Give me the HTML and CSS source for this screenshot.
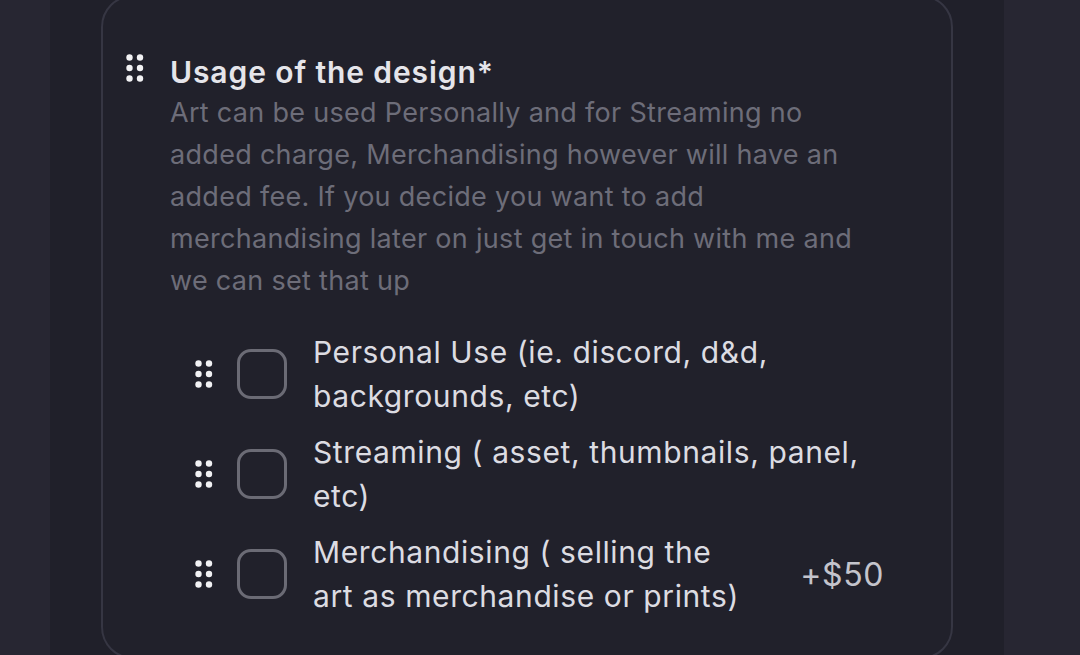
FILE: index.html
```html
<!DOCTYPE html>
<html lang="en">
<head>
    <meta charset="UTF-8">
    <meta name="viewport" content="width=device-width, initial-scale=1.0">
    <title>Usage of the design</title>
    <link rel="stylesheet" href="styles.css">
</head>
<body>
    <div class="page">
        <div class="card">
            <div class="question">
                <span class="handle">
                    <svg width="18" height="28" viewBox="0 0 18 28"><g fill="#f2f2f4"><circle cx="3.5" cy="3.5" r="3.2"/><circle cx="14" cy="3.5" r="3.2"/><circle cx="3.5" cy="14" r="3.2"/><circle cx="14" cy="14" r="3.2"/><circle cx="3.5" cy="24.5" r="3.2"/><circle cx="14" cy="24.5" r="3.2"/></g></svg>
                </span>
                <div class="question-body">
                    <h2 class="title">Usage of the design*</h2>
                    <p class="description">Art can be used Personally and for Streaming no added charge, Merchandising however will have an added fee. If you decide you want to add merchandising later on just get in touch with me and we can set that up</p>
                </div>
            </div>

            <div class="options">
                <label class="option">
                    <span class="handle">
                        <svg width="18" height="28" viewBox="0 0 18 28"><g fill="#f2f2f4"><circle cx="3.5" cy="3.5" r="3.2"/><circle cx="14" cy="3.5" r="3.2"/><circle cx="3.5" cy="14" r="3.2"/><circle cx="14" cy="14" r="3.2"/><circle cx="3.5" cy="24.5" r="3.2"/><circle cx="14" cy="24.5" r="3.2"/></g></svg>
                    </span>
                    <span class="box"></span>
                    <span class="option-text">Personal Use (ie. discord, d&amp;d, backgrounds, etc)</span>
                </label>
                <label class="option">
                    <span class="handle">
                        <svg width="18" height="28" viewBox="0 0 18 28"><g fill="#f2f2f4"><circle cx="3.5" cy="3.5" r="3.2"/><circle cx="14" cy="3.5" r="3.2"/><circle cx="3.5" cy="14" r="3.2"/><circle cx="14" cy="14" r="3.2"/><circle cx="3.5" cy="24.5" r="3.2"/><circle cx="14" cy="24.5" r="3.2"/></g></svg>
                    </span>
                    <span class="box"></span>
                    <span class="option-text">Streaming ( asset, thumbnails, panel, etc)</span>
                </label>
                <label class="option">
                    <span class="handle">
                        <svg width="18" height="28" viewBox="0 0 18 28"><g fill="#f2f2f4"><circle cx="3.5" cy="3.5" r="3.2"/><circle cx="14" cy="3.5" r="3.2"/><circle cx="3.5" cy="14" r="3.2"/><circle cx="14" cy="14" r="3.2"/><circle cx="3.5" cy="24.5" r="3.2"/><circle cx="14" cy="24.5" r="3.2"/></g></svg>
                    </span>
                    <span class="box"></span>
                    <span class="option-text">Merchandising ( selling the art as merchandise or prints)</span>
                    <span class="price">+$50</span>
                </label>
            </div>
        </div>
    </div>
</body>
</html>
```

FILE: styles.css
```css
body {
    margin: 0;
    background: #272632;
    font-family: Inter, "Noto Sans", sans-serif;
    overflow: hidden;
}

.page {
    margin: 0 76px 0 50px;
    height: 655px;
    background: #20202a;
    overflow: hidden;
}

.card {
    margin: -5px 0 0 51px;
    width: 852px;
    height: 664px;
    box-sizing: border-box;
    border: 2px solid #363643;
    border-radius: 32px;
    background: #21212b;
    padding: 57px 0 0 23px;
}

.question {
    display: flex;
    align-items: flex-start;
    gap: 26px;
}

.question > .handle {
    margin-top: 0;
}

.handle {
    display: flex;
    width: 18px;
    height: 28px;
    flex-shrink: 0;
}

.title {
    margin: 0;
    font-size: 30px;
    line-height: 36px;
    font-weight: 600;
    letter-spacing: 0.9px;
    color: #e5e5ea;
}

.description {
    margin: 2px 0 0;
    width: 700px;
    font-size: 27px;
    line-height: 42px;
    letter-spacing: 0.3px;
    color: #6d6d79;
}

.options {
    display: flex;
    flex-direction: column;
    gap: 12px;
    margin-top: 28px;
    padding-left: 69px;
    padding-right: 67px;
}

.option {
    display: flex;
    align-items: center;
    min-height: 88px;
}

.box {
    width: 50px;
    height: 50px;
    box-sizing: border-box;
    border: 3px solid #6b6b75;
    border-radius: 14px;
    margin-left: 24px;
    flex-shrink: 0;
}

.option-text {
    flex: 1;
    margin-left: 26px;
    font-size: 30px;
    line-height: 44px;
    letter-spacing: 0.6px;
    color: #dcdce2;
}

.price {
    margin-left: 50px;
    font-size: 32px;
    letter-spacing: 0.6px;
    color: #c4c4cc;
}
```
